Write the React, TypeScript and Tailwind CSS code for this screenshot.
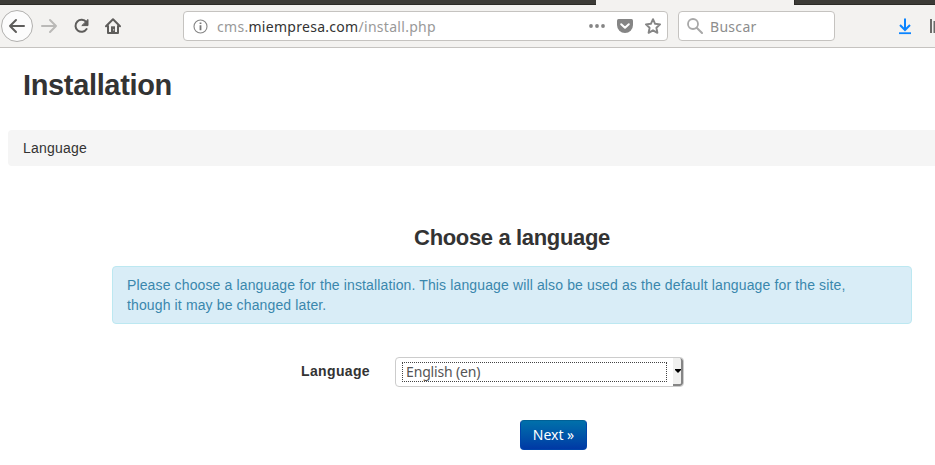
import React from "react";

const uiFont = "font-['Noto_Sans',sans-serif]";

function TabStrip() {
  return (
    <div className="flex h-[5px] bg-[#f3f2f0]">
      <div className="w-[596px] border-b border-[#2b2a26] bg-[#3c3b37]" />
      <div className="w-[198px]" />
      <div className="flex-1 border-b border-l border-[#2b2a26] bg-[#3c3b37]" />
    </div>
  );
}

function NavButtons() {
  return (
    <svg className="h-[42px] w-[183px] shrink-0" viewBox="0 5 183 42" fill="none">
      <circle cx="17" cy="26" r="15.5" fill="#fcfcfc" stroke="#b1b0ae" />
      <g stroke="#5e5d5b" strokeWidth="2" strokeLinecap="round" strokeLinejoin="round">
        <path d="M24 26H10M16 20l-6 6 6 6" />
        <path d="M86.3 22.2A6 6 0 1 0 86.6 29" />
        <path d="M88 19.8v5.8h-5.8z" fill="#5e5d5b" strokeWidth="1" />
        <path d="M106 26.3l7-7 7 7" />
        <path d="M108 26v7h10v-7" />
      </g>
      <path d="M111 33.5v-7.2h4v7.2z" fill="#5e5d5b" />
      <path d="M113.2 29.2h1v1.3h-1z" fill="#f3f2f0" />
      <path d="M42 26h14M50 20l6 6-6 6" stroke="#bab9b7" strokeWidth="2" strokeLinecap="round" strokeLinejoin="round" />
    </svg>
  );
}

function AddressBar() {
  return (
    <div className="flex h-[30px] w-[485px] shrink-0 items-center rounded-[4px] border border-[#c5c3c0] bg-white pl-[9px] pr-[5px]">
      <svg className="h-[15px] w-[15px] shrink-0" viewBox="0 0 15 15" fill="none">
        <circle cx="7.5" cy="7.5" r="6.5" stroke="#858585" strokeWidth="1.1" />
        <path d="M7.5 6.3v5M7.5 3.5v1.6" stroke="#777" strokeWidth="1.8" />
      </svg>
      <div className={`ml-[9px] mt-[2px] whitespace-nowrap text-[14px] leading-5 tracking-[0.29px] text-[#999] ${uiFont}`}>
        cms.<span className="text-[#333]">miempresa.com</span>/install.php
      </div>
      <svg className="ml-auto h-5 w-[75px] shrink-0" viewBox="587 16 75 20" fill="none">
        <g fill="#858585">
          <circle cx="591" cy="26" r="1.9" />
          <circle cx="597" cy="26" r="1.9" />
          <circle cx="603" cy="26" r="1.9" />
          <path d="M618.5 19h13a1.5 1.5 0 0 1 1.5 1.5v4.5a8 8 0 0 1-16 0v-4.5a1.5 1.5 0 0 1 1.5-1.5z" />
        </g>
        <path d="M621.2 24.2l3.8 3.6 3.8-3.6" stroke="white" strokeWidth="2" strokeLinecap="round" strokeLinejoin="round" />
        <path d="M653 19.2l2.1 4.6 5 .6-3.7 3.4 1 5-4.4-2.5-4.4 2.5 1-5-3.7-3.4 5-.6z" stroke="#858585" strokeWidth="1.9" strokeLinejoin="round" />
      </svg>
    </div>
  );
}

function SearchBar() {
  return (
    <div className="ml-[10px] flex h-[30px] w-[157px] shrink-0 items-center rounded-[4px] border border-[#c5c3c0] bg-white pl-[8px]">
      <svg className="h-4 w-4 shrink-0" viewBox="0 0 16 16" fill="none" stroke="#a8a8a8">
        <circle cx="6" cy="6" r="5" strokeWidth="1.8" />
        <path d="M9.7 9.7l5.3 5.3" strokeWidth="2" strokeLinecap="round" />
      </svg>
      <span className={`ml-[7px] mt-[2px] text-[14px] leading-5 tracking-[0.3px] text-[#8d8d8d] ${uiFont}`}>Buscar</span>
    </div>
  );
}

function Toolbar() {
  return (
    <div className="flex h-[43px] items-center border-b border-[#c5c3c0] bg-[#f3f2f0]">
      <NavButtons />
      <AddressBar />
      <SearchBar />
      <svg className="ml-auto h-[42px] w-[40px] shrink-0" viewBox="895 5 40 42" fill="none">
        <path d="M905 18.5v11M900 25l5 5 5-5" stroke="#0a84ff" strokeWidth="2" />
        <path d="M899 33.2h12" stroke="#0a84ff" strokeWidth="1.8" />
        <path d="M931 19v14M934.5 21v12" stroke="#6b6a68" strokeWidth="2" />
      </svg>
    </div>
  );
}

export default function App() {
  return (
    <div className="h-[465px] w-[935px] overflow-hidden bg-white font-['Liberation_Sans',Arial,sans-serif] text-[14px] leading-5 text-[#333]">
      <TabStrip />
      <Toolbar />
      <main className="pl-2">
        <h1 className="ml-[15px] mt-[17px] h-10 text-[29px] font-bold leading-10 tracking-[-0.35px]">Installation</h1>
        <div className="mt-[25px] h-9 rounded-l-[4px] bg-[#f5f5f5] px-[15px] py-2 tracking-[0.2px]">Language</div>
        <section className="ml-[104px] mt-[52px] w-[800px]">
          <h2 className="h-10 text-center text-[22px] font-bold leading-10 tracking-[-0.35px]">Choose a language</h2>
          <div className="mt-2 h-[58px] whitespace-nowrap rounded-[4px] border border-[#bce8f1] bg-[#d9edf7] px-[14px] py-2 tracking-[0.13px] text-[#3a87ad]">
            Please choose a language for the installation. This language will also be used as the default language for
            the site,
            <br />
            though it may be changed later.
          </div>
          <div className="mt-[33px] flex h-[30px]">
            <label className="w-[258px] pt-1 text-right font-bold tracking-[0.35px]">Language</label>
            <div className="ml-[25px] flex w-[289px] overflow-hidden rounded-[4px] border border-[#ccc] bg-white pl-[6px]">
              <div className={`mt-1 h-5 w-[265px] border border-dotted border-[#444] pl-[3px] text-[14px] leading-[18px] tracking-[-0.15px] text-[#555] ${uiFont}`}>
                English (en)
              </div>
              <div className="ml-auto flex w-[10px] items-center justify-center rounded-r-[3px] border-b-2 border-r-2 border-[#858585] bg-[#f0f0ef]">
                <svg className="ml-px h-[4px] w-[6px]" viewBox="0 0 6 4">
                  <path d="M0 0h6v1L3 4 0 1z" fill="black" />
                </svg>
              </div>
            </div>
          </div>
          <button className={`ml-[408px] mt-[33px] block h-[30px] w-[67px] rounded-[4px] border border-[#0044aa] border-t-[#006096] bg-linear-to-b from-[#0070aa] to-[#0038a5] text-center text-[14px] leading-5 text-white ${uiFont}`}>
            Next »
          </button>
        </section>
      </main>
    </div>
  );
}
